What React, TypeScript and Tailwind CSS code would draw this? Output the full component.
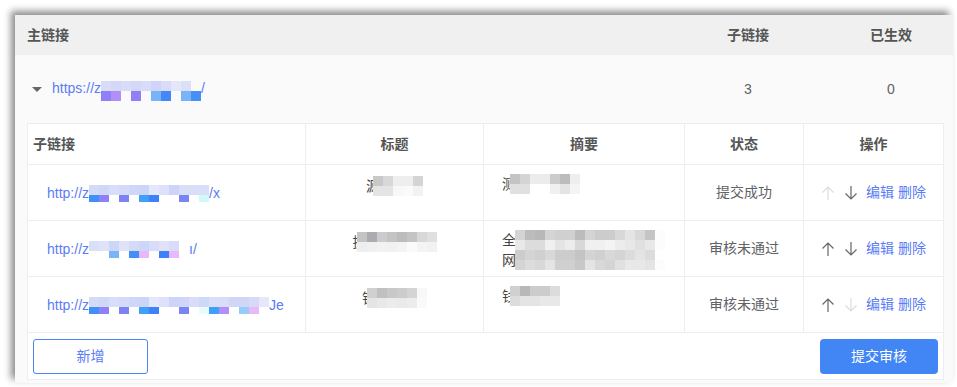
import React from 'react';

type Rows = string[][];

const Mosaic = ({ rows, heights, className = '' }: { rows: Rows; heights: number[]; className?: string }) => (
  <span className={`inline-flex flex-col shrink-0 ${className}`}>
    {rows.map((row, i) => (
      <span key={i} className="flex" style={{ height: heights[i] }}>
        {row.map((c, j) => (
          <span key={j} className="w-[10px] h-full" style={{ backgroundColor: c || 'transparent' }} />
        ))}
      </span>
    ))}
  </span>
);

const Arrow = ({ up, muted }: { up?: boolean; muted?: boolean }) => (
  <svg
    width="14"
    height="16"
    viewBox="0 0 14 16"
    fill="none"
    stroke={muted ? '#dcdcdc' : '#666'}
    strokeWidth="1.2"
    className={up ? '' : 'rotate-180'}
  >
    <path d="M7 2v13M1.5 7.5 7 2l5.5 5.5" />
  </svg>
);

const rowsData = [
  {
    pre: 'http://z',
    post: '/x',
    postGap: 0,
    link: [
      ['#d4daf8', '#d0d8f8', '#d8ddf8', '#d4daf8', '#d0d6f8', '#ccd4f8', '#e4e8fa', '#dee2f8', '#ccd4f8', '#dadff8', '#dadff8', '#dadff8'],
      ['#4090f8', '#9080f8', '', '#7c84f4', '', '#40a0f8', '#4080f8', '', '', '#7c84f4', '', '#d0fafa'],
    ],
    titleChar: '源',
    titleShift: 'ml-[-7px]',
    title: [
      ['#c8c8c8', '#d8d8d8', '#eeeeee', '#eeeeee', '#d4d4d6'],
      ['#e4e4e4', '#e4e4e4', '#f8f8fa', '#fafafa', '#f2f2f2'],
    ],
    summaryChars: ['测'],
    summary: [
      ['#c4c4c4', '#d4d4d4', '#ececec', '#ececec', '#cccccc', '#bcbcbc', '#eeeeee'],
      ['#e0e0e0', '#e0e0e0', '', '', '#f0f0f0', '#e4e4e4', '#f4f4f4'],
    ],
    status: '提交成功',
    upMuted: true,
    downMuted: false,
  },
  {
    pre: 'http://z',
    post: 'ı/',
    postGap: 10,
    link: [
      ['#dadff8', '#e0e3f8', '#ccd6f8', '#e0e3f8', '#d4daf8', '#ccd6f8', '#d8dcf8', '#e0e3f8', '#d8dcf8'],
      ['', '', '#78b4f8', '', '#4090f8', '#e8b8f8', '', '#4080f8', '#e8b8f8'],
    ],
    titleChar: '提',
    titleShift: 'ml-[-10px]',
    title: [
      ['#c4c4c4', '#acacb0', '#cccccc', '#c4c4c6', '#bcbcbc', '#c4c4c4', '#d8d8da', '#e0e0e2'],
      ['#eeeeee', '#f0f0f0', '#f2f2f2', '#f0f2f2', '#f4f4f4', '#fafafa', '#f4f4f4', '#f2f2f2'],
    ],
    summaryChars: ['全', '网'],
    summary: [
      ['#d4d4d4', '#bcbcbc', '#b8b8b8', '#d4d4d4', '#d0d0d0', '#d0d0d0', '#bcbcbc', '#d4d4d4', '#cccccc', '#cccccc', '#d8d8d8', '#e4e4e4', '#d8d8d8', '#c4c4c4', '#fcfcfc'],
      ['#e8e8e8', '#dcdcdc', '#dcdcdc', '#f0f0f0', '#e4e4e4', '#ececec', '#d8d8d8', '#f0f0f0', '#f0f0f0', '#f4f4f4', '#ececec', '#e8e8e8', '#e0e0e0', '#e8e8e8', '#fcfcfc'],
      ['#cccccc', '#d4d4d4', '#d0d0d0', '#d8d8d8', '#cccccc', '#cccccc', '#c4c4c4', '#d4d4d4', '#d0d0d0', '#d8d8d8', '#d4d4d4', '#dcdcdc', '#e4e4e4', '#dcdcdc', ''],
      ['#d4d4d4', '#dcdcdc', '#d8d8d8', '#e4e4e4', '#d0d0d0', '#d0d0d0', '#c8c8c8', '#e4e4e4', '#d8d8d8', '#d4d4d4', '#e0e0e0', '#e8e8e8', '#e8e8e8', '#e4e4e4', '#fcfcfc'],
    ],
    status: '审核未通过',
    upMuted: false,
    downMuted: false,
  },
  {
    pre: 'http://z',
    post: 'Je',
    postGap: 0,
    link: [
      ['#d4daf8', '#d0d8f8', '#d8ddf8', '#d4daf8', '#d0d6f8', '#ccd4f8', '#e4e8fa', '#dee2f8', '#ccd4f8', '#d0d6f8', '#dcdcf8', '#ccdaf8', '#dadff8', '#d8dcf8', '#d0d6f8', '#d0d6f8', '#d6daf8', '#e4e8f8'],
      ['#4090f8', '#9080f8', '', '#7c84f4', '', '#40a0f8', '#4080f8', '', '', '#7c84f4', '', '#e8fcfc', '#40a0f8', '#b090f8', '', '#98ccf8', '#e8b8f8', ''],
    ],
    titleChar: '钱',
    titleShift: 'ml-[-9px]',
    title: [
      ['#d0d0d0', '#c0c0c0', '#c8c8c8', '#cccccc', '#d4d4d4', '#f8f8fa'],
      ['#e4e4e4', '#e8e8e8', '#ececec', '#eaeaea', '#ececec', '#fafafa'],
    ],
    summaryChars: ['钱'],
    summary: [
      ['#d0d0d0', '#b8b8b8', '#cccccc', '#cccccc', '#dcdcdc'],
      ['#dcdcdc', '#e4e4e4', '#e4e4e4', '#e8e8e8', '#e8e8e8'],
    ],
    status: '审核未通过',
    upMuted: false,
    downMuted: true,
  },
];

const cols = 'grid grid-cols-[278px_178px_201px_119px_139px]';
const cell = 'border-r border-[#ebeef5]';

const App: React.FC = () => {
  return (
    <div className="min-h-screen bg-white pt-[15px] pl-[15px] font-['Liberation_Sans','Noto_Sans_CJK_SC',sans-serif] text-[14px]">
      <div className="w-[938px] h-[368px] bg-[#fafafa] shadow-[-4px_-4px_7px_rgba(0,0,0,0.45)]">
        {/* Header */}
        <div className="h-[40px] bg-[#f0f0f0] grid grid-cols-[1fr_120px_145px] items-center text-[#555] font-semibold">
          <div className="pl-[12px]">主链接</div>
          <div className="text-center">子链接</div>
          <div className="text-center pl-[21px]">已生效</div>
        </div>

        {/* Main row */}
        <div className="h-[68px] grid grid-cols-[1fr_120px_145px] items-center text-[#606266]">
          <div className="flex items-center pl-[17px]">
            <span className="w-0 h-0 border-l-[5px] border-r-[5px] border-t-[5px] border-l-transparent border-r-transparent border-t-[#666] mr-[10px]" />
            <span className="flex items-start text-[#5b7cf6] leading-[20px]">
              <span>https://z</span>
              <Mosaic
                className="mt-[3px]"
                heights={[10, 10]}
                rows={[
                  ['#d8dcf8', '#d4d8f8', '#d8dcf8', '#d4d8f8', '#d8dcf8', '#d0d4f8', '#d8dcf8', '#e4e6fa', '#dcdff8', ''],
                  ['#9080f8', '#b090f8', '', '#9080f8', '', '#78b4f8', '#4488f8', '', '#78b4f8', '#4490f8'],
                ]}
              />
              <span>/</span>
            </span>
          </div>
          <div className="text-center">3</div>
          <div className="text-center pl-[21px]">0</div>
        </div>

        {/* Sub table */}
        <div className="ml-[12px] w-[917px] bg-white border border-[#ebeef5]">
          <div className={`${cols} h-[41px] border-b border-[#ebeef5] text-[#555] font-semibold`}>
            <div className={`${cell} flex items-center pl-[5px]`}>子链接</div>
            <div className={`${cell} flex items-center justify-center`}>标题</div>
            <div className={`${cell} flex items-center justify-center`}>摘要</div>
            <div className={`${cell} flex items-center justify-center`}>状态</div>
            <div className="flex items-center justify-center">操作</div>
          </div>

          {rowsData.map((r, i) => (
            <div key={i} className={`${cols} h-[56px] border-b border-[#ebeef5] text-[#606266]`}>
              <div className={`${cell} flex items-center pl-[19px]`}>
                <span className="flex items-start text-[#5b7cf6] leading-[20px]">
                  <span>{r.pre}</span>
                  <Mosaic className="mt-[2px]" heights={[10, 7]} rows={r.link} />
                  <span style={{ marginLeft: r.postGap }}>{r.post}</span>
                </span>
              </div>
              <div className={`${cell} flex justify-center items-start pt-[11px]`}>
                <span className="flex items-center">
                  <span className="leading-[20px] text-[#444]">{r.titleChar}</span>
                  <Mosaic className={r.titleShift} heights={[10, 10]} rows={r.title} />
                </span>
              </div>
              <div className={`${cell} flex items-start pl-[18px] pt-[9px]`}>
                <span className="flex items-center">
                  <span className="flex flex-col leading-[20px] text-[#444]">
                    {r.summaryChars.map((c) => (
                      <span key={c}>{c}</span>
                    ))}
                  </span>
                  <Mosaic
                    className={r.summaryChars.length > 1 ? 'ml-[-1px]' : 'ml-[-6px]'}
                    heights={r.summary.map(() => 10)}
                    rows={r.summary}
                  />
                </span>
              </div>
              <div className={`${cell} flex items-center justify-center`}>{r.status}</div>
              <div className="flex items-center justify-center">
                <Arrow up muted={r.upMuted} />
                <span className="ml-[9px]">
                  <Arrow muted={r.downMuted} />
                </span>
                <span className="ml-[8px] text-[#5b7cf6]">编辑</span>
                <span className="ml-[4px] text-[#5b7cf6]">删除</span>
              </div>
            </div>
          ))}

          {/* Footer */}
          <div className="h-[46px] flex items-center justify-between px-[5px]">
            <button className="w-[115px] h-[35px] border border-[#4a85f0] rounded-[3px] text-[#5b7cf6] bg-white">
              新增
            </button>
            <button className="w-[118px] h-[35px] rounded-[4px] bg-[#4285f4] text-white">
              提交审核
            </button>
          </div>
        </div>
      </div>
    </div>
  );
};

export default App;
